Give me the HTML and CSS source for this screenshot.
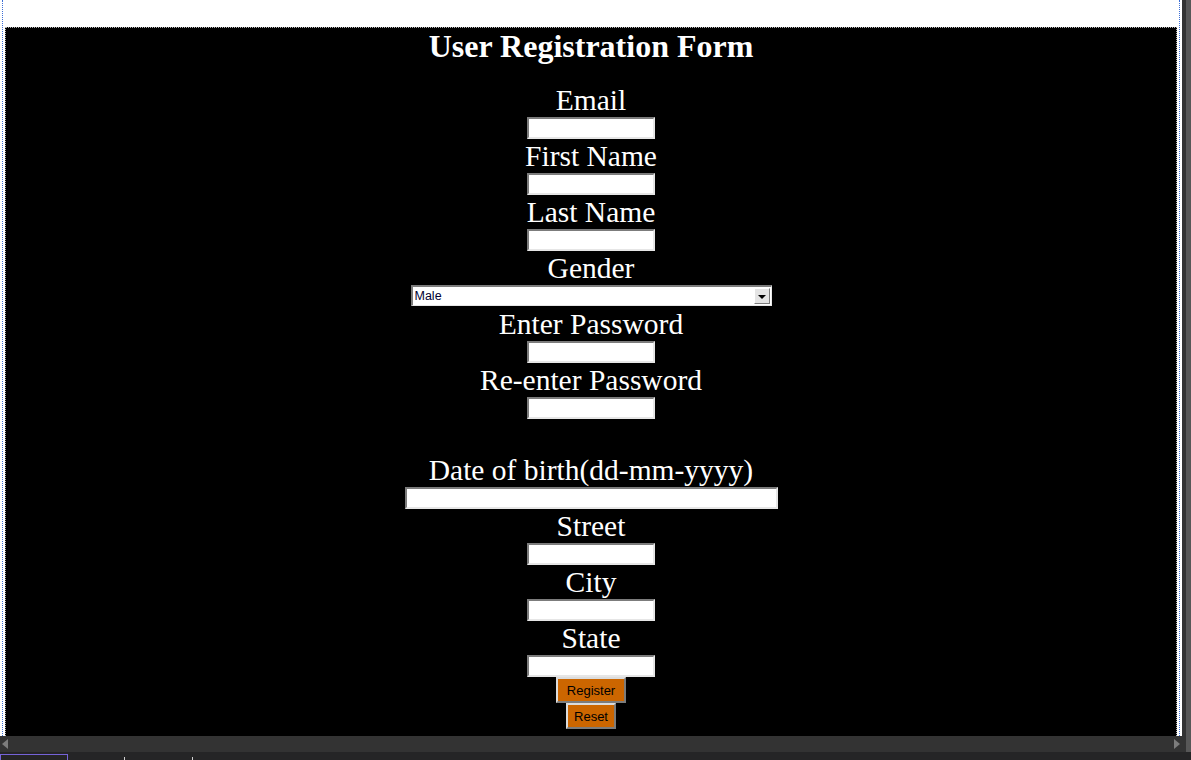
FILE: index.html
```html
<!DOCTYPE html>
<html>
<head>
<meta charset="utf-8">
<title>User Registration Form</title>
<link rel="stylesheet" href="styles.css">
</head>
<body>
<div class="ide">
  <div class="main">
    <div class="designer">
      <div class="guide">
        <div class="page">
          <form class="form">
            <h1 class="title">User Registration Form</h1>
            <div class="label">Email</div>
            <input class="field" type="text">
            <div class="label">First Name</div>
            <input class="field" type="text">
            <div class="label">Last Name</div>
            <input class="field" type="text">
            <div class="label">Gender</div>
            <div class="select-box">
              <select class="select">
                <option>Male</option>
                <option>Female</option>
              </select>
              <span class="select-btn"><span class="tri"></span></span>
            </div>
            <div class="label">Enter Password</div>
            <input class="field" type="password">
            <div class="label">Re-enter Password</div>
            <input class="field" type="password">
            <div class="label spacer"></div>
            <div class="label">Date of birth(dd-mm-yyyy)</div>
            <input class="field wide" type="text">
            <div class="label">Street</div>
            <input class="field" type="text">
            <div class="label">City</div>
            <input class="field" type="text">
            <div class="label">State</div>
            <input class="field" type="text">
            <button class="btn btn-register" type="button">Register</button>
            <button class="btn btn-reset" type="reset">Reset</button>
          </form>
        </div>
      </div>
    </div>
    <div class="vbar">
      <div class="vtrack"></div>
      <div class="vthumb"></div>
    </div>
  </div>
  <div class="hbar">
    <div class="htrack">
      <span class="arrow arrow-left"></span>
      <span class="arrow arrow-right"></span>
    </div>
    <div class="corner"></div>
  </div>
  <div class="tabs">
    <span class="tab"></span>
    <span class="tick tick-1"></span>
    <span class="tick tick-2"></span>
  </div>
</div>
</body>
</html>
```

FILE: styles.css
```css
html, body {
  margin: 0;
  padding: 0;
  background: #ffffff;
}

.ide {
  width: 1191px;
  height: 760px;
  display: flex;
  flex-direction: column;
  overflow: hidden;
}

.main {
  height: 736px;
  display: flex;
  flex-direction: row;
}

.designer {
  width: 1182px;
  height: 736px;
  background: #ffffff;
  padding-left: 2px;
  box-sizing: border-box;
}

.guide {
  width: 1178px;
  height: 736px;
  box-sizing: border-box;
  border-left: 1px dotted #3d6fd6;
  border-right: 1px dotted #3d6fd6;
  padding: 27px 2px 0 2px;
  display: flex;
  flex-direction: column;
}

.page {
  flex: 1;
  background: #000000;
  border-top: 1px dotted #b4b4b4;
  border-left: 1px dotted #b4b4b4;
  border-right: 1px dotted #b4b4b4;
  overflow: hidden;
}

.form {
  margin: 0;
  text-align: center;
  color: #ffffff;
  font-family: "Liberation Serif", "Times New Roman", serif;
  display: flex;
  flex-direction: column;
  align-items: center;
}

.title {
  margin: 0 0 19px;
  font-size: 32px;
  line-height: 36px;
  height: 36px;
  font-weight: bold;
  white-space: nowrap;
}

.label {
  font-size: 29.5px;
  line-height: 34px;
  height: 34px;
  white-space: nowrap;
}

.field {
  display: block;
  width: 128px;
  height: 22px;
  margin: 0;
  padding: 0 3px;
  box-sizing: border-box;
  background: #ffffff;
  border-style: solid;
  border-width: 2px;
  border-color: #7c7c7c #e6e6e6 #e6e6e6 #7c7c7c;
  font-family: "Liberation Sans", Arial, sans-serif;
  font-size: 12px;
  outline: none;
}

.field.wide {
  width: 373px;
}

.select-box {
  width: 361px;
  height: 21px;
  margin-bottom: 1px;
  box-sizing: border-box;
  display: flex;
  align-items: center;
  background: #ffffff;
  border-style: solid;
  border-width: 2px 1px 1px 2px;
  border-color: #7c7c7c #e6e6e6 #e6e6e6 #7c7c7c;
}

.select {
  flex: 1;
  height: 100%;
  margin: 0;
  padding: 0 0 0 2px;
  border: none;
  background: #ffffff;
  appearance: none;
  -webkit-appearance: none;
  font-family: "Liberation Sans", Arial, sans-serif;
  font-size: 12.5px;
  color: #000033;
  outline: none;
}

.select-btn {
  width: 16px;
  height: 16px;
  margin-right: 1px;
  box-sizing: border-box;
  background: #e4e4e4;
  border-style: solid;
  border-width: 1px;
  border-color: #ffffff #7c7c7c #7c7c7c #ffffff;
  display: flex;
  align-items: center;
  justify-content: center;
}

.tri {
  width: 0;
  height: 0;
  border-left: 4px solid transparent;
  border-right: 4px solid transparent;
  border-top: 4px solid #000000;
  margin-top: 1px;
}

.btn {
  display: block;
  height: 26px;
  margin: 0;
  padding: 0;
  box-sizing: border-box;
  background: #cc6600;
  color: #000000;
  font-family: "Liberation Sans", Arial, sans-serif;
  font-size: 13px;
  border-style: solid;
  border-width: 2px;
  border-color: #dcdcdc #7c7c7c #7c7c7c #dcdcdc;
}

.btn-register {
  width: 70px;
}

.btn-reset {
  width: 50px;
}

.vbar {
  display: flex;
  flex-direction: row;
  width: 9px;
}

.vtrack {
  width: 4px;
  background: #333333;
}

.vthumb {
  width: 5px;
  background: #575757;
}

.hbar {
  height: 16px;
  display: flex;
  flex-direction: row;
}

.htrack {
  flex: 1;
  background: #333333;
  display: flex;
  align-items: center;
  justify-content: space-between;
  padding: 0 6px 0 2px;
}

.arrow {
  width: 0;
  height: 0;
  border-top: 5px solid transparent;
  border-bottom: 5px solid transparent;
}

.arrow-left {
  border-right: 6px solid #7c7c7c;
}

.arrow-right {
  border-left: 6px solid #7c7c7c;
}

.corner {
  width: 5px;
  background: #575757;
}

.tabs {
  height: 8px;
  background: #252526;
  display: flex;
  flex-direction: row;
  align-items: flex-end;
}

.tab {
  width: 68px;
  height: 6px;
  box-sizing: border-box;
  border: 1px solid #7563d8;
  border-bottom: none;
}

.tick {
  width: 1px;
  height: 3px;
  background: #d0d0d0;
}

.tick-1 {
  margin-left: 56px;
}

.tick-2 {
  margin-left: 67px;
}
```
